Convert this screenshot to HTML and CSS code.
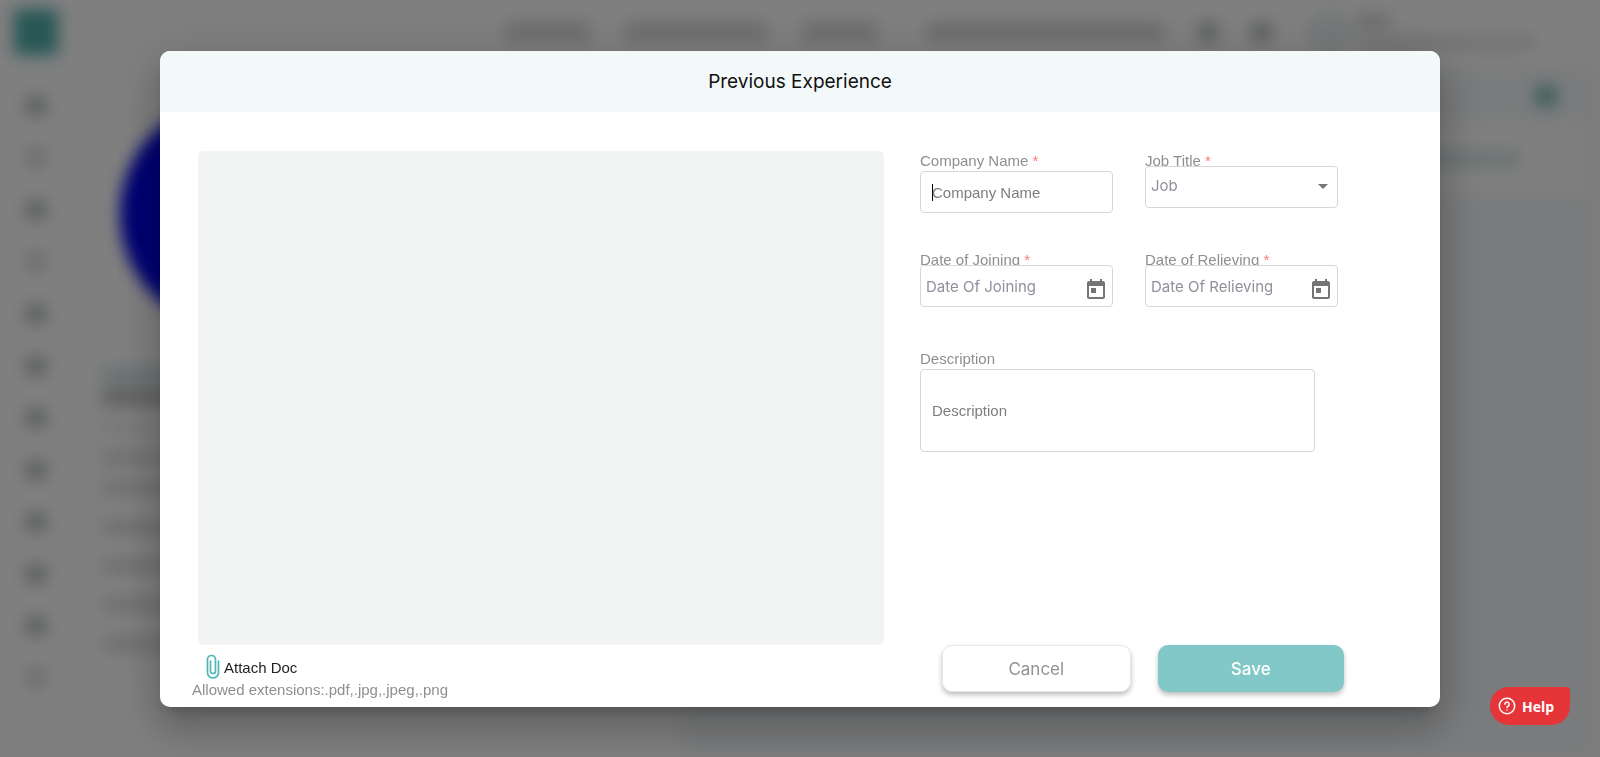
FILE: index.html
```html
<!DOCTYPE html>
<html lang="en">

<head>
    <meta charset="UTF-8">
    <meta name="viewport" content="width=device-width, initial-scale=1.0">
    <title>Previous Experience</title>
    <link rel="stylesheet" href="styles.css">
</head>

<body>
    <!-- page behind the dialog -->
    <div class="app" aria-hidden="true">
        <div class="topbar">
            <span class="logo"></span>
            <div class="topnav">
                <span class="bar nav-s"></span>
                <span class="bar nav-m"></span>
                <span class="bar nav-xs"></span>
                <span class="bar nav-l"></span>
                <span class="dot"></span>
                <span class="dot"></span>
            </div>
            <span class="avatar"></span>
            <div class="user">
                <span class="bar user-name"></span>
                <span class="bar user-role"></span>
            </div>
        </div>
        <div class="columns">
            <div class="sidebar">
                <span class="dot"></span>
                <span class="dot light"></span>
                <span class="dot"></span>
                <span class="dot light"></span>
                <span class="dot"></span>
                <span class="dot"></span>
                <span class="dot"></span>
                <span class="dot"></span>
                <span class="dot"></span>
                <span class="dot"></span>
                <span class="dot"></span>
                <span class="dot light"></span>
            </div>
            <div class="profile">
                <span class="photo"></span>
                <span class="bar teal"></span>
                <span class="bar strong"></span>
                <span class="bar faint"></span>
                <span class="bar"></span>
                <span class="bar"></span>
                <span class="bar row"></span>
                <span class="bar row"></span>
                <span class="bar row"></span>
                <span class="bar row"></span>
            </div>
            <div class="details"></div>
            <div class="content">
                <div class="content-head"><span class="add"></span></div>
                <div class="content-card"><span class="bar link"></span></div>
            </div>
        </div>
    </div>

    <div class="overlay">
        <form class="dialog" role="dialog" aria-labelledby="title" onsubmit="event.preventDefault();">
            <header class="dialog-header">
                <h1 id="title">Previous Experience</h1>
            </header>

            <div class="dialog-body">
                <div class="left">
                    <div class="preview"></div>
                    <button type="button" class="attach">
                        <svg width="14" height="26" viewBox="0 0 14 26" fill="none" stroke="#4db6b6" stroke-linecap="round">
                            <path d="M12.500 7V18.500a5.500 5.500 0 0 1-11 0V5.500a4 4 0 0 1 8 0V17a2.500 2.500 0 0 1-5 0V7" stroke-width="1.700"/>
                        </svg>
                        Attach Doc
                    </button>
                    <p class="hint">Allowed extensions:.pdf,.jpg,.jpeg,.png</p>
                </div>

                <div class="right">
                    <div class="fields">
                        <div class="field">
                            <label for="company">Company Name <span class="req">*</span></label>
                            <input type="text" id="company" class="company" placeholder="Company Name">
                        </div>

                        <div class="field">
                            <label for="job">Job Title <span class="req">*</span></label>
                            <div class="control">
                                <select id="job">
                                    <option>Job</option>
                                </select>
                                <svg class="arrow" width="10" height="5" viewBox="0 0 10 5"><path d="M0 0h10L5 5z" fill="#757575"/></svg>
                            </div>
                        </div>

                        <div class="field">
                            <label for="joining">Date of Joining <span class="req">*</span></label>
                            <div class="control">
                                <input type="text" id="joining" placeholder="Date Of Joining">
                                <button type="button" class="calendar" aria-label="Open calendar">
                                    <svg width="24" height="24" viewBox="0 0 24 24"><path fill="#757575" d="M19 3h-1V1h-2v2H8V1H6v2H5c-1.110 0-2 .9-2 2v14c0 1.100.89 2 2 2h14c1.100 0 2-.9 2-2V5c0-1.100-.9-2-2-2zm0 16H5V8h14v11zM7 10h5v5H7z"/></svg>
                                </button>
                            </div>
                        </div>

                        <div class="field">
                            <label for="relieving">Date of Relieving <span class="req">*</span></label>
                            <div class="control">
                                <input type="text" id="relieving" placeholder="Date Of Relieving">
                                <button type="button" class="calendar" aria-label="Open calendar">
                                    <svg width="24" height="24" viewBox="0 0 24 24"><path fill="#757575" d="M19 3h-1V1h-2v2H8V1H6v2H5c-1.110 0-2 .9-2 2v14c0 1.100.89 2 2 2h14c1.100 0 2-.9 2-2V5c0-1.100-.9-2-2-2zm0 16H5V8h14v11zM7 10h5v5H7z"/></svg>
                                </button>
                            </div>
                        </div>

                        <div class="field description">
                            <label for="description">Description</label>
                            <textarea id="description" placeholder="Description"></textarea>
                        </div>
                    </div>

                    <div class="actions">
                        <button type="button" class="cancel">Cancel</button>
                        <button type="submit" class="save">Save</button>
                    </div>
                </div>
            </div>
        </form>
    </div>

    <button type="button" class="help">
        <svg width="18" height="18" viewBox="0 0 18 18" fill="none" stroke="#fff" stroke-width="1.500" stroke-linecap="round">
            <circle cx="9" cy="9" r="7.700"/>
            <path d="M6.900 7.200a2.100 2.100 0 1 1 3.200 1.800c-.8.500-1.100.8-1.100 1.500"/>
            <path d="M9 12.900v.1"/>
        </svg>
        Help
    </button>
</body>

</html>
```

FILE: styles.css
```css
* {
    box-sizing: border-box;
}

body {
    margin: 0;
    height: 100vh;
    overflow: hidden;
    font-family: "Liberation Sans", Arial, sans-serif;
    font-size: 15px;
    background-color: #fff;
}

button {
    border: none;
    padding: 0;
    background: none;
    font-family: inherit;
    cursor: pointer;
}

/* blurred page */
.app {
    height: 100vh;
    overflow: hidden;
    display: flex;
    flex-direction: column;
    filter: blur(8px);
    background-color: #fff;
}

.bar {
    display: block;
    height: 12px;
    background-color: #ccc;
}

.dot {
    display: block;
    width: 20px;
    height: 20px;
    border-radius: 5px;
    background-color: #b8bcbc;
}

.dot.light {
    background-color: #d6dada;
}

.topbar {
    height: 68px;
    flex: none;
    display: flex;
    align-items: center;
    padding: 0 66px 4px 14px;
}

.logo {
    width: 44px;
    height: 46px;
    background-color: #4fb0ac;
}

.topnav {
    display: flex;
    align-items: center;
    gap: 34px;
    margin-left: auto;
}

.topnav .bar {
    height: 20px;
    background-color: #dadada;
}

.nav-s {
    width: 86px;
}

.nav-m {
    width: 144px;
}

.nav-xs {
    width: 76px;
}

.nav-l {
    width: 238px;
    margin-left: 14px;
}

.avatar {
    width: 46px;
    height: 46px;
    margin: 0 4px 0 34px;
    border-radius: 50%;
    background-color: #eaf1f1;
}

.user {
    display: grid;
    gap: 10px;
}

.user-name {
    width: 34px;
    background-color: #d0d0d0;
}

.user-role {
    width: 178px;
    background-color: #e0e0e0;
}

.columns {
    flex: 1;
    display: flex;
}

.sidebar {
    width: 76px;
    flex: none;
    display: flex;
    flex-direction: column;
    align-items: center;
    gap: 32px;
    padding: 28px 2px 0 0;
    border-right: 2px solid #f6f6f6;
}

.profile {
    width: 302px;
    flex: none;
    display: flex;
    flex-direction: column;
    gap: 18px;
    padding: 28px 26px 0;
    border-right: 2px solid #f6f6f6;
}

.profile .bar {
    flex: none;
    background-color: #d8d8d8;
}

.photo {
    flex: none;
    align-self: flex-end;
    width: 230px;
    height: 230px;
    margin: 3px 0 21px;
    border-radius: 50%;
    background-color: #0000e6;
}

.profile .teal {
    background-color: #c4dede;
}

.profile .strong {
    height: 18px;
    margin-top: -10px;
    background-color: #c0c0c0;
}

.profile .faint {
    margin-top: -2px;
    background-color: #ececec;
}

.profile .row {
    margin-top: 9px;
}

.details {
    width: 304px;
    flex: none;
}

.content {
    flex: 1;
    background-color: #f5f7f9;
}

.content-head {
    display: flex;
    justify-content: flex-end;
    padding: 16px 42px 14px 0;
}

.add {
    width: 24px;
    height: 24px;
    border-radius: 50%;
    background-color: #84bcb8;
}

.content-card {
    display: flex;
    justify-content: flex-end;
    margin-right: 14px;
    padding: 30px 66px 28px 0;
    background-color: #fff;
}

.link {
    width: 110px;
    height: 14px;
    background-color: #cfe4e2;
}

/* dialog */
.overlay {
    position: fixed;
    inset: 0;
    display: flex;
    align-items: center;
    justify-content: center;
    padding-top: 1px;
    background-color: rgba(0, 0, 0, 0.5);
}

.dialog {
    width: 80%;
    overflow: hidden;
    border-radius: 10px;
    background-color: #fff;
    box-shadow: 0 11px 15px -7px rgba(0, 0, 0, 0.2), 0 24px 38px 3px rgba(0, 0, 0, 0.14), 0 9px 46px 8px rgba(0, 0, 0, 0.12);
}

.dialog-header {
    height: 61px;
    display: flex;
    align-items: center;
    justify-content: center;
    background-color: #f3f8f9;
}

h1 {
    margin: 0;
    font-family: Inter, sans-serif;
    font-size: 19px;
    font-weight: 400;
    color: #111;
}

.dialog-body {
    display: flex;
    gap: 36px;
    padding: 39px 66px 8px 38px;
}

.left {
    flex: 686;
}

.right {
    flex: 454;
    display: flex;
    flex-direction: column;
}

.preview {
    height: 494px;
    border-radius: 5px;
    background-color: #f1f4f3;
}

.attach {
    display: flex;
    align-items: center;
    gap: 4px;
    height: 34px;
    margin: 5px 0 0 8px;
    font-size: 15px;
    color: #222;
}

.hint {
    margin: -3px 0 0 -6px;
    line-height: 18px;
    color: #8f8f8f;
}

.fields {
    display: grid;
    grid-template-columns: 193px 193px;
    grid-template-rows: 62px 62px auto;
    gap: 37px 32px;
}

.field {
    display: flex;
    flex-direction: column;
}

.field label {
    line-height: 20px;
    color: #8f8f8f;
}

.req {
    color: #f77;
}

.description {
    grid-column: 1 / 3;
    width: 395px;
}

.control {
    position: relative;
    margin-top: -5px;
}

input, select, textarea {
    display: block;
    width: 100%;
    height: 42px;
    border: 1px solid #d9d5d9;
    border-radius: 4px;
    background-color: #fff;
    outline: none;
    font-family: inherit;
    font-size: 15px;
}

.control input, .control select {
    padding: 0 36px 0 5px;
    font-family: Inter, sans-serif;
    color: #92909b;
}

.control select {
    appearance: none;
    padding-bottom: 3px;
}

input::placeholder, textarea::placeholder {
    color: #7d7d7d;
    opacity: 1;
}

.control input::placeholder {
    color: #92909b;
}

/* text cursor at the start of the empty box */
.company {
    padding: 0 11px;
    background: linear-gradient(#000, #000) 11px 12px / 1px 17px no-repeat #fff;
}

textarea {
    height: 83px;
    padding: 32px 11px 0;
    resize: none;
}

.arrow {
    position: absolute;
    right: 10px;
    top: 18px;
}

.calendar {
    position: absolute;
    right: 5px;
    top: 13px;
    height: 24px;
}

.actions {
    display: flex;
    gap: 27px;
    margin: auto 30px 7px 22px;
}

.actions button {
    flex: 1;
    height: 47px;
    border-radius: 10px;
    font-family: Inter, sans-serif;
    font-size: 17px;
    box-shadow: 0 3px 5px rgba(0, 0, 0, 0.25);
}

.actions .cancel {
    border: 1px solid #e6e6e6;
    background-color: #fff;
    color: #929292;
}

.actions .save {
    background-color: #82c8c8;
    color: #fff;
    font-weight: 500;
}

.help {
    position: fixed;
    right: 30px;
    bottom: 32px;
    width: 80px;
    height: 38px;
    display: flex;
    align-items: center;
    gap: 6px;
    padding-left: 8px;
    border-radius: 20px 4px 20px 20px;
    background-color: #e63539;
    color: #fff;
    font-family: "Open Sans", sans-serif;
    font-size: 14px;
    font-weight: 700;
}
```
